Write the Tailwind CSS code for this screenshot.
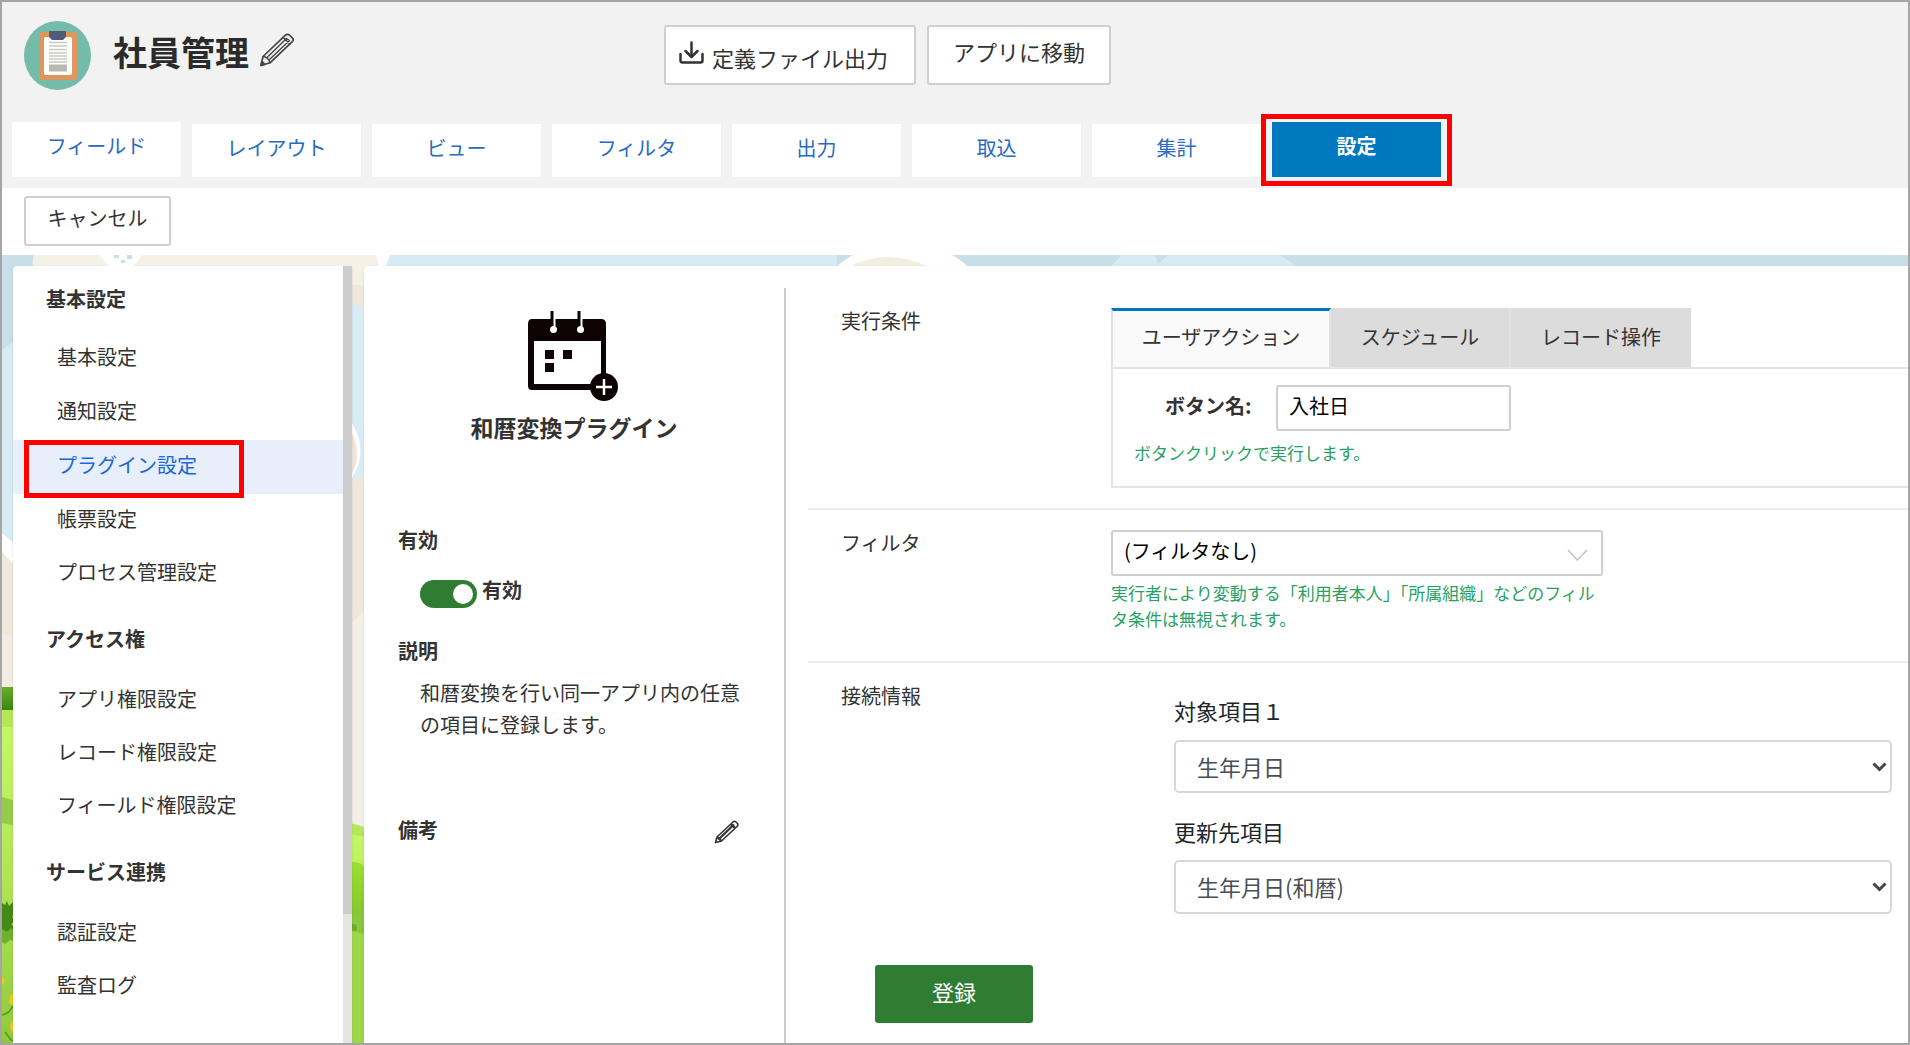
<!DOCTYPE html>
<html lang="ja">
<head>
  <meta charset="UTF-8" />
  <meta name="viewport" content="width=device-width, initial-scale=1" />
  <title>社員管理 - プラグイン設定</title>
  <script src="https://cdn.jsdelivr.net/npm/@tailwindcss/browser@4"></script>
</head>
<body class="h-screen flex flex-col overflow-hidden border-2 border-[#a5a5a5] bg-white text-[20px] leading-[30px] text-[#333333] font-['Noto_Sans_CJK_JP',sans-serif]">

  <!-- ヘッダー -->
  <header class="bg-[#f2f2f2] pb-[11px] shrink-0">
    <div class="relative flex items-center h-[106px] pl-[22px]">
      <svg class="w-[67px] h-[69px]" viewBox="0 0 67 69" preserveAspectRatio="none" aria-hidden="true">
        <ellipse cx="33.5" cy="34.5" rx="33.5" ry="34.5" fill="#74bbaa" />
        <rect x="15" y="11" width="38" height="48" rx="3" fill="#de965c" />
        <rect x="20" y="16" width="28" height="38" rx="2" fill="#ffffff" />
        <path d="M25 10h17v6l-3 3H28l-3-3z" fill="#505b76" />
        <path d="M25 21.5h18M25 25h18M25 28.500h18M25 32h18M25 35h18M25 38h18M25 41h18" stroke="#c9c9c0" stroke-width="1.300" />
        <rect x="25" y="43.500" width="18" height="7" fill="#b8b8ac" />
      </svg>
      <h1 class="ml-[22px] text-[34px] leading-[50px] font-bold text-[#2b2b2b] pb-[6px]">社員管理</h1>
      <button type="button" class="ml-[10px] mb-[10px]" aria-label="アプリ名を編集">
        <svg class="w-[36px] h-[36px]" viewBox="0 0 36 36" fill="none" stroke="#444444" stroke-width="1.700" stroke-linejoin="round" stroke-linecap="round">
          <path d="M2 33.500L4 24.500L26.500 3.200C27.800 2 29.600 2.200 31 3.500L33.500 6.200C34.500 7.300 34.400 8.600 33.300 9.700L11 30.800L2 33.500Z" />
          <path d="M4 24.500C7 24.500 10.500 27.500 11 30.800M7.500 26L27.500 6.500M10.500 27.500L30.500 8.500M24 5.500L31 12M27.500 6.500L30.500 8.500" stroke-width="1.400" />
          <path d="M2 33.500L3 29.500L6 32.300Z" fill="#444444" />
        </svg>
      </button>
      <div class="absolute left-[662px] top-[23px] flex gap-[11px] text-[22px] leading-[32px]">
        <button type="button" class="flex items-center w-[252px] h-[60px] pl-[13px] bg-white border-2 border-[#cfcfcf] rounded-[3px]">
          <svg class="w-[25px] h-[24px] mb-1" viewBox="0 0 25 24" fill="none" stroke="#333333" stroke-width="2.500" stroke-linecap="round" stroke-linejoin="round" aria-hidden="true">
            <path d="M1.500 13v6.500a2 2 0 0 0 2 2h18a2 2 0 0 0 2-2V13M12.500 1.500v14M6.500 10l6 6 6-6" />
          </svg>
          <span class="ml-[8px] pt-1">定義ファイル出力</span>
        </button>
        <button type="button" class="w-[184px] h-[60px] pb-2 bg-white border-2 border-[#cfcfcf] rounded-[3px]">アプリに移動</button>
      </div>
    </div>

    <nav class="flex items-end gap-[11px] h-[69px] pl-[10px] text-[#2a6abf]">
      <a href="#" class="w-[169px] h-[55px] pt-[9px] bg-white text-center">フィールド</a>
      <a href="#" class="w-[169px] h-[53px] pt-[9px] bg-white text-center">レイアウト</a>
      <a href="#" class="w-[169px] h-[53px] pt-[9px] bg-white text-center">ビュー</a>
      <a href="#" class="w-[169px] h-[53px] pt-[9px] bg-white text-center">フィルタ</a>
      <a href="#" class="w-[169px] h-[53px] pt-[9px] bg-white text-center">出力</a>
      <a href="#" class="w-[169px] h-[53px] pt-[9px] bg-white text-center">取込</a>
      <a href="#" class="w-[169px] h-[53px] pt-[9px] bg-white text-center">集計</a>
      <a href="#" class="relative w-[169px] h-[55px] pt-[9px] bg-[#0078bf] text-white font-bold text-center">
        設定
        <span class="absolute -inset-x-[11px] -top-2 -bottom-[9px] border-5 border-[#ff0000]"></span>
      </a>
    </nav>
  </header>

  <div class="h-[67px] shrink-0 pt-2 pl-[22px]">
    <button type="button" class="w-[147px] h-[50px] pb-[7px] bg-white border-2 border-[#cfcfcf] rounded-[3px]">キャンセル</button>
  </div>

  <main class="relative flex-1 min-h-0 flex pt-[11px] pl-[11px]">

    <!-- 背景イラスト(空・雲・草原) -->
    <svg class="absolute inset-0 w-full h-full" viewBox="0 0 1906 788" preserveAspectRatio="xMinYMin slice" aria-hidden="true">
      <defs>
        <linearGradient id="hill" x1="0" y1="0" x2="0" y2="1">
          <stop offset="0" stop-color="#6aae28" />
          <stop offset="1" stop-color="#37850f" />
        </linearGradient>
        <linearGradient id="grass" x1="0" y1="0" x2="0" y2="1">
          <stop offset="0" stop-color="#c6f968" />
          <stop offset="0.500" stop-color="#b0e655" />
          <stop offset="1" stop-color="#8fca3d" />
        </linearGradient>
        <linearGradient id="bush" x1="0" y1="0" x2="0" y2="1">
          <stop offset="0" stop-color="#9be02f" />
          <stop offset="1" stop-color="#7fbf30" />
        </linearGradient>
      </defs>
      <rect width="1906" height="788" fill="#c8dfe9" />
      <!-- 空 -->
      <path d="M0 95L20 80V300H0Z" fill="#d6ebf3" />
      <path d="M380 0H835V20H340V250H380Z" fill="#d6ebf3" />
      <path d="M1108 12L1120 0H1278L1296 12Z" fill="#d6ebf3" />
      <path d="M1153 0H1166L1156 9Z" fill="#c8dfe9" />
      <!-- 雲 -->
      <path d="M32 0H380V50Q356 40 340 48V30H36Q28 14 32 0Z" fill="#f5f1e6" />
      <path d="M98 0Q104 10 108 12H130Q136 8 139 0Z" fill="#ffffff" />
      <path d="M112 0h5v3h-5zM125 0h5v4h-5zM119 5h4v3h-4z" fill="#c8dfe9" />
      <path d="M374 0H388L384 11H410V14H378Z" fill="#ffffff" />
      <path d="M834 12Q845 3 851 0H950Q958 4 966 12Z" fill="#ffffff" />
      <path d="M847 12Q885-8 926 12Z" fill="#f3efe0" />
      <rect x="348" y="50" width="20" height="180" fill="#d8edf5" />
      <path d="M340 50V47Q355 48 366 56V30H340Z" fill="#eee9db" />
      <path d="M348 165Q362 185 357 208L348 228Z" fill="#ffffff" />
      <path d="M348 175Q358 190 354 210L348 222Z" fill="#f0e6da" />
      <path d="M348 228L368 216V600H348Z" fill="#eee9db" />
      <path d="M348 370L368 350V600H348Z" fill="#f4f0e8" />
      <path d="M0 278L14 290V320L0 300Z" fill="#ffffff" />
      <path d="M0 297L14 312V440H0Z" fill="#eee9db" />
      <rect y="380" width="14" height="60" fill="#f2ece3" />
      <!-- 草原(左) -->
      <rect y="432" width="14" height="24" fill="url(#hill)" />
      <rect y="455" width="14" height="333" fill="url(#grass)" />
      <rect y="455" width="14" height="17" fill="#b5e858" />
      <path d="M0 542L14 546V571L0 568Z" fill="#95cb4b" />
      <path d="M0 648l3 2 2-4 2 5 4-4v8l3 2-4 5 4 4-5 3 5 5-6 2-3 6-5-3z" fill="#438a16" />
      <path d="M0 674l5 3 4-4 5 5-3 4 3 5-6-2-5 4-3-2z" fill="#6db22c" />
      <path d="M0 721l3 5-3 4zM8 742q3-6 6-3v10H7zM8 770l4-7 2 2v14l-5-3z" fill="#ffc414" />
      <path d="M0 760Q8 758 10 752H14M3 777l6 8 5 1" stroke="#4f9a1c" stroke-width="1.500" fill="none" />
      <!-- 草原(中央) -->
      <path d="M348 568Q358 570 368 578V788H348Z" fill="url(#grass)" />
      <path d="M348 568Q358 570 368 575V583L348 579Z" fill="#b5e858" />
      <path d="M348 607Q362 606 364 616V680H348Z" fill="url(#bush)" />
      <path d="M348 666Q358 650 364 654V680L348 676Z" fill="#8ac83d" />
      <circle cx="351" cy="673" r="4" fill="#6eae2b" />
      <path d="M348 675L368 681V788H348Z" fill="#9ed748" />
    </svg>

    <!-- サイドメニュー -->
    <aside class="relative flex w-[339px] shrink-0 overflow-hidden bg-white rounded-tl-[4px] shadow">
      <nav class="w-[330px] shrink-0">
        <h2 class="flex items-center h-[66px] pl-[33px] font-bold">基本設定</h2>
        <ul>
          <li><a href="#" class="flex items-center h-[54px] pb-1 pl-[44px]">基本設定</a></li>
          <li><a href="#" class="flex items-center h-[54px] pb-1 pl-[44px]">通知設定</a></li>
          <li>
            <a href="#" class="relative flex items-center h-[54px] pb-1 pl-[44px] bg-[#e7eefc] text-[#1a67d8]">
              プラグイン設定
              <span class="absolute left-[11px] w-[220px] top-0 -bottom-1 border-5 border-[#ff0000]"></span>
            </a>
          </li>
          <li><a href="#" class="flex items-center h-[53px] pb-1 pl-[44px]">帳票設定</a></li>
          <li><a href="#" class="flex items-center h-[53px] pb-1 pl-[44px]">プロセス管理設定</a></li>
        </ul>
        <h2 class="flex items-center h-[74px] pt-1 pl-[33px] font-bold">アクセス権</h2>
        <ul>
          <li><a href="#" class="flex items-center h-[53px] pb-1 pl-[44px]">アプリ権限設定</a></li>
          <li><a href="#" class="flex items-center h-[53px] pb-1 pl-[44px]">レコード権限設定</a></li>
          <li><a href="#" class="flex items-center h-[53px] pb-1 pl-[44px]">フィールド権限設定</a></li>
        </ul>
        <h2 class="flex items-center h-[74px] pt-1 pl-[33px] font-bold">サービス連携</h2>
        <ul>
          <li><a href="#" class="flex items-center h-[53px] pb-1 pl-[44px]">認証設定</a></li>
          <li><a href="#" class="flex items-center h-[53px] pb-1 pl-[44px]">監査ログ</a></li>
        </ul>
        <h2 class="flex items-center h-[74px] pt-1 pl-[33px] font-bold">ユーザ</h2>
      </nav>
      <div class="flex-1 bg-[#e4e4e4]">
        <div class="h-5/6 bg-[#cccccc]"></div>
      </div>
    </aside>

    <!-- プラグイン設定 -->
    <div class="relative ml-[12px] flex flex-1 min-w-0 bg-white rounded-tl-[4px] shadow overflow-hidden">

      <section class="w-[420px] shrink-0 pl-[34px]">
        <div class="flex flex-col items-center pt-[45px] pr-[34px]">
          <svg class="w-[92px] h-[92px] mr-[2px]" viewBox="0 0 92 92" aria-hidden="true">
            <path d="M5 8H74Q79 8 79 13V74Q79 79 75 79H5Q1 79 1 75V13Q1 8 5 8ZM7 30V73H74V30Z" fill="#0d0305" fill-rule="evenodd" />
            <path d="M27 0V17M54 0V17" stroke="#ffffff" stroke-width="3" />
            <path d="M25 0V15M52 0V15" stroke="#0d0305" stroke-width="3" />
            <circle cx="26.500" cy="18.500" r="3.500" fill="#ffffff" />
            <circle cx="53.500" cy="18.500" r="3.500" fill="#ffffff" />
            <path d="M18 39h9v9h-9zM36 39h9v9h-9zM18 52h9v9h-9z" fill="#0d0305" />
            <circle cx="77" cy="76" r="14" fill="#0d0305" />
            <path d="M77 68V84M69 76H85" stroke="#ffffff" stroke-width="2.500" />
          </svg>
          <h2 class="mt-[7px] text-[23px] leading-[34px] font-bold">和暦変換プラグイン</h2>
        </div>

        <h3 class="mt-[81px] font-bold">有効</h3>
        <label class="flex items-center mt-[20px] pl-[22px] font-bold">
          <input type="checkbox" checked class="peer sr-only" />
          <span class="flex items-center justify-end w-[57px] h-[28px] pr-1 rounded-full bg-[#2e7d32] mt-[2px]">
            <span class="size-[20px] rounded-full bg-white"></span>
          </span>
          <span class="ml-[5px] pb-[5px]">有効</span>
        </label>

        <h3 class="mt-[26px] font-bold">説明</h3>
        <p class="mt-[11px] ml-[22px] w-[324px] leading-[32px]">和暦変換を行い同一アプリ内の任意の項目に登録します。</p>

        <div class="flex items-center justify-between mt-[74px] pr-[45px]">
          <h3 class="font-bold">備考</h3>
          <button type="button" aria-label="備考を編集">
            <svg class="w-[25px] h-[24px] mt-1" viewBox="0 0 25 24" fill="none" stroke="#333333" stroke-width="1.600" stroke-linejoin="round">
              <path d="M1.500 22.500L3 17L19 2Q20.500 0.800 22 2L23.500 3.500Q24.500 5 23 6.500L7.500 21Z" />
              <path d="M3 17L7.500 21M5.500 18.500L20 4.500M17 4L21 8" stroke-width="2.200" />
            </svg>
          </button>
        </div>
      </section>

      <section class="flex-1 min-w-0 mt-[22px] pl-[22px] border-l-2 border-[#cccccc]">
        <div class="flex h-[222px] pt-5 border-b-2 border-[#ececec]">
          <div class="w-[303px] shrink-0 pl-[33px] -mt-[2px]">実行条件</div>
          <div class="flex-1 min-w-0 mb-5 flex flex-col">
            <div class="flex h-[59px]" role="tablist">
              <button type="button" role="tab" class="w-[220px] pb-1 bg-[#fafafa] border-t-3 border-t-[#0078bf] border-x-2 border-x-[#dee2e6]">ユーザアクション</button>
              <button type="button" role="tab" class="w-[180px] pb-[2px] bg-[#dcdcdc] border-r-2 border-r-[#dee2e6]">スケジュール</button>
              <button type="button" role="tab" class="w-[180px] pb-[2px] bg-[#dcdcdc]">レコード操作</button>
            </div>
            <div class="flex-1 pl-[21px] pt-4 border-y-2 border-l-2 border-[#e1e5e9]">
              <div class="flex items-center pl-[31px]">
                <label for="buttonName" class="w-[111px] font-bold pb-1">ボタン名:</label>
                <input id="buttonName" type="text" value="入社日" class="w-[235px] h-[46px] pl-[11px] pb-[6px] border-2 border-[#cfcfcf] rounded-[3px] text-black" />
              </div>
              <p class="mt-[9px] text-[17px] leading-[26px] text-[#27a163]">ボタンクリックで実行します。</p>
            </div>
          </div>
        </div>

        <div class="flex h-[153px] pt-5 border-b-2 border-[#ececec]">
          <label for="filter" class="w-[303px] shrink-0 pl-[33px] -mt-[2px]">フィルタ</label>
          <div class="w-[496px]">
            <div class="relative w-[492px]">
              <select id="filter" class="block appearance-none w-full h-[46px] pl-[11px] pb-1 bg-white border-2 border-[#cfcfcf] rounded-[3px] text-black">
                <option>(フィルタなし)</option>
              </select>
              <svg class="absolute right-[15px] top-[19px] w-[21px] h-[12px]" viewBox="0 0 21 12" fill="none" stroke="#c4c4c4" stroke-width="1.600" aria-hidden="true">
                <path d="M1 1L10.500 11L20 1" />
              </svg>
            </div>
            <p class="mt-1 text-[17px] leading-[26px] text-[#27a163]">実行者により変動する「利用者本人」「所属組織」などのフィルタ条件は無視されます。</p>
          </div>
        </div>

        <div class="flex pt-[18px]">
          <div class="w-[303px] shrink-0 pl-[33px]">接続情報</div>
          <div class="flex-1 pl-[63px] pr-4 pt-[13px] text-[22px] leading-[32px]">
            <label for="target" class="block text-[#212529]">対象項目１</label>
            <div class="relative mt-[14px]">
              <select id="target" class="block appearance-none w-full h-[53px] pl-[21px] pb-[2px] bg-white border-2 border-[#d3d8dd] rounded-[5px] text-[#495057]">
                <option>生年月日</option>
              </select>
              <svg class="absolute right-[5px] top-[22px] w-[15px] h-[10px]" viewBox="0 0 15 10" fill="none" stroke="#3f4549" stroke-width="3" aria-hidden="true">
                <path d="M1.500 1.500L7.500 7.500L13.500 1.500" />
              </svg>
            </div>
            <label for="destination" class="block mt-[22px] text-[#212529]">更新先項目</label>
            <div class="relative mt-[13px]">
              <select id="destination" class="block appearance-none w-full h-[54px] pl-[21px] pb-[2px] bg-white border-2 border-[#d3d8dd] rounded-[5px] text-[#495057]">
                <option>生年月日(和暦)</option>
              </select>
              <svg class="absolute right-[5px] top-[22px] w-[15px] h-[10px]" viewBox="0 0 15 10" fill="none" stroke="#3f4549" stroke-width="3" aria-hidden="true">
                <path d="M1.500 1.500L7.500 7.500L13.500 1.500" />
              </svg>
            </div>
          </div>
        </div>

        <button type="button" class="mt-[51px] ml-[67px] w-[158px] h-[58px] pb-[6px] bg-[#2e7d32] rounded-[3px] text-[22px] text-white">登録</button>
      </section>
    </div>
  </main>

</body>
</html>
